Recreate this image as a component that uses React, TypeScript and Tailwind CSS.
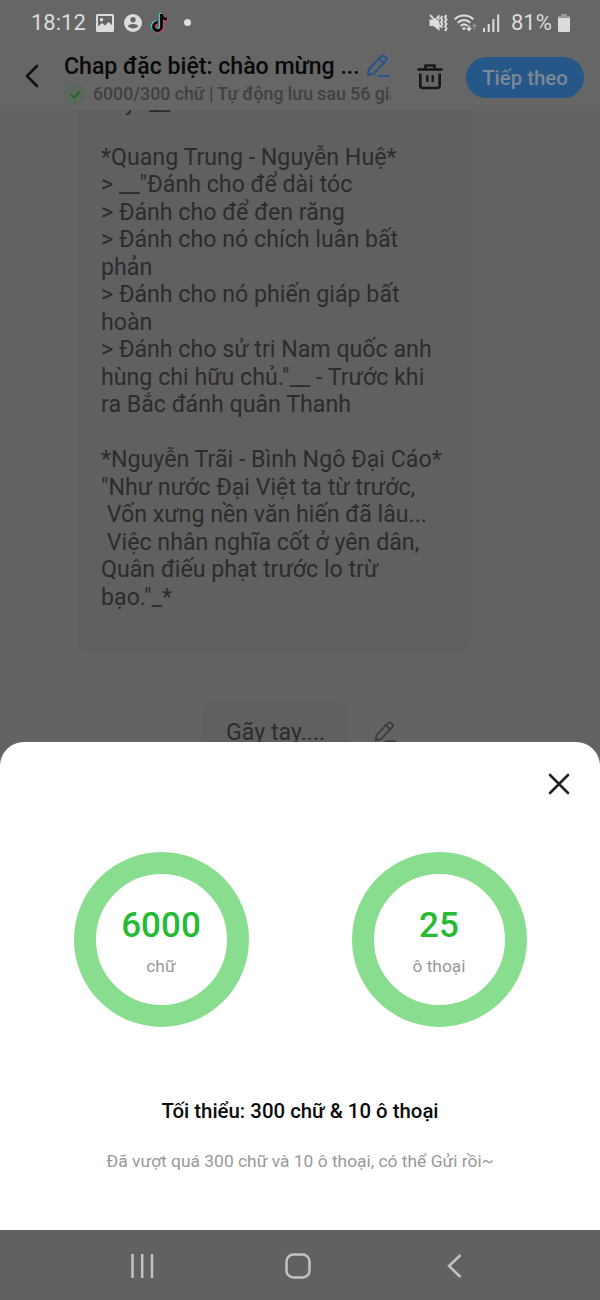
import React from 'react';

const storyLines = [
  'xây" __',
  '',
  '*Quang Trung - Nguyễn Huệ*',
  '> __"Đánh cho để dài tóc',
  '> Đánh cho để đen răng',
  '> Đánh cho nó chích luân bất',
  'phản',
  '> Đánh cho nó phiến giáp bất',
  'hoàn',
  '> Đánh cho sử tri Nam quốc anh',
  'hùng chi hữu chủ."__ - Trước khi',
  'ra Bắc đánh quân Thanh',
  '',
  '*Nguyễn Trãi - Bình Ngô Đại Cáo*',
  '"Như nước Đại Việt ta từ trước,',
  ' Vốn xưng nền văn hiến đã lâu...',
  ' Việc nhân nghĩa cốt ở yên dân,',
  'Quân điếu phạt trước lo trừ',
  'bạo."_*',
];

const PencilIcon: React.FC<{ className?: string }> = ({ className }) => (
  <svg viewBox="0 0 24 24" fill="none" stroke="currentColor" strokeWidth="2" strokeLinecap="round" strokeLinejoin="round" className={className}>
    <path d="M2 21l.8-5.500L15 2.300a2.600 2.600 0 0 1 3.700-.100l1 1a2.600 2.600 0 0 1 .1 3.600L8 19.500z" />
    <path d="M13.500 5l4.200 4" />
    <path d="M12.500 22h10.500" />
  </svg>
);

const StatusBar: React.FC = () => (
  <div className="flex h-[45px] items-center pl-[31px] pr-[30px] text-[22px] text-[#dcdcdc]">
    <span className="w-[55px] whitespace-nowrap">18:12</span>
    <svg viewBox="0 0 18 18" className="ml-[10px] h-[18px] w-[18px]">
      <path fill="currentColor" fillRule="evenodd" d="M1.500 0h15A1.500 1.500 0 0 1 18 1.500v15a1.500 1.500 0 0 1-1.500 1.500h-15A1.500 1.500 0 0 1 0 16.500v-15A1.500 1.500 0 0 1 1.500 0zM2 2v10.500l4-3.500 3 2.500 3.500-3.500 3.500 3V2zM5.500 4a1.700 1.700 0 1 1 0 3.400A1.700 1.700 0 0 1 5.500 4z" />
    </svg>
    <svg viewBox="0 0 18 18" className="ml-[10px] h-[18px] w-[18px]">
      <circle cx="9" cy="9" r="9" fill="currentColor" />
      <circle cx="9" cy="5.800" r="2.700" fill="#666" />
      <path d="M3.700 12C5 9.200 13 9.200 14.300 12 12.500 15.200 5.500 15.200 3.700 12z" fill="#666" />
    </svg>
    <svg viewBox="0 0 18 20" fill="none" strokeWidth="2.800" className="ml-[9px] h-5 w-[18px]">
      <g stroke="#42cdc8" transform="translate(-1.200 -.8)">
        <path d="M10.500 1v12.500a4 4 0 1 1-4-4" />
        <path d="M10.500 1.500c.5 3 2.500 4.500 5.500 4.700" />
      </g>
      <g stroke="#e0415f" transform="translate(1.200 .8)">
        <path d="M10.500 1v12.500a4 4 0 1 1-4-4" />
        <path d="M10.500 1.500c.5 3 2.500 4.500 5.500 4.700" />
      </g>
      <g stroke="#050505">
        <path d="M10.500 1v12.500a4 4 0 1 1-4-4" />
        <path d="M10.500 1.500c.5 3 2.500 4.500 5.500 4.700" />
      </g>
    </svg>
    <span className="ml-[15px] h-[7px] w-[7px] rounded-full bg-[#dcdcdc]" />

    <svg viewBox="0 0 19 18" className="ml-auto h-[18px] w-[19px]" fill="none" stroke="currentColor">
      <path d="M.5 5.500h4l6-5V17l-6-5h-4z" fill="currentColor" stroke="none" />
      <path d="M4 .5l8 8.500" stroke="#666" />
      <path d="M1 .8l10.500 12" strokeWidth="1.800" />
      <path d="M13.300 2l-1.300 2 1.300 2-1.300 2 1.300 2-1.300 2 1.300 2M17.300 1L16 3.300l1.500 2.200L16 7.800l1.500 2.200-1.500 2.300 1.500 2.200L16 17" strokeWidth="2" />
    </svg>
    <svg viewBox="0 0 24 18" className="ml-[6px] h-[18px] w-6" fill="none" stroke="currentColor" strokeWidth="2.100">
      <path d="M.7 5.200a13.500 13.500 0 0 1 18.600 0M3.700 8.700a9 9 0 0 1 12.600 0M6.700 11.900a5 5 0 0 1 6.600 0" />
      <circle cx="10" cy="14.500" r="1.600" fill="currentColor" stroke="none" />
      <path d="M15 11.500v5M12.900 14l2.100 2.300 2.100-2.300" strokeWidth="1.600" />
      <path d="M20.500 15.500v-5M18.600 12.500l1.900-2 1.900 2" stroke="#929292" strokeWidth="1.300" />
    </svg>
    <svg viewBox="0 0 17 18" className="ml-[5px] h-[18px] w-[17px]" fill="currentColor">
      <path d="M0 14h2v4H0zM4.700 10h2v8h-2zM9.400 5h2v13h-2zM14.200.500h2V18h-2z" />
    </svg>
    <span className="ml-[11px] w-[41px] whitespace-nowrap">81%</span>
    <svg viewBox="0 0 12 18" className="ml-[6px] h-[18px] w-3">
      <path d="M3 0h6v2h3v3H0V2h3z" fill="#999" />
      <path d="M0 4h12v13a1 1 0 0 1-1 1H1a1 1 0 0 1-1-1z" fill="currentColor" />
    </svg>
  </div>
);

const Header: React.FC = () => (
  <header className="flex h-[65px] bg-[#666]">
    <svg viewBox="0 0 14 24" className="ml-[25px] mt-[19px] h-6 w-[14px]" fill="none" stroke="#121212" strokeWidth="2.600" strokeLinecap="round" strokeLinejoin="round">
      <path d="M12 2L2 12l10 10" />
    </svg>
    <div className="ml-[25px] w-[327px]">
      <div className="mt-[8px] flex h-7">
        <h1 className="w-[302px] whitespace-nowrap text-[23.100px] font-medium leading-7 text-[#090909]">Chap đặc biệt: chào mừng ...</h1>
        <PencilIcon className="mt-px h-6 w-6 text-[#25568b]" />
      </div>
      <div className="mt-[2px] flex h-[22px] items-center overflow-hidden">
        <span className="flex h-[22px] w-[22px] shrink-0 items-center justify-center rounded-full bg-[#5c685d]">
          <svg viewBox="0 0 12 10" className="h-[9px] w-[11px]" fill="none" stroke="#156c1c" strokeWidth="1.800">
            <path d="M1 5l3.500 3.500L11 1.500" />
          </svg>
        </span>
        <span className="ml-[7px] whitespace-nowrap text-[17.700px] font-medium text-[#414141]">6000/300 chữ | Tự động lưu sau 56 giây</span>
      </div>
    </div>
    <svg viewBox="0 0 26 27" className="ml-[26px] mt-[18px] h-[27px] w-[26px]" fill="none" stroke="#171717" strokeWidth="2.600" strokeLinejoin="round">
      <path d="M.5 6.500h25M8.500 6.500v-4h9v4M3.300 10.500V22.500a2.500 2.500 0 0 0 2.500 2.500h14.400a2.500 2.500 0 0 0 2.500-2.500V10.500" />
      <path d="M10.300 12v7M15.700 12v7" strokeWidth="2.300" />
    </svg>
    <button className="ml-[23px] mt-3 h-[41px] w-[118px] rounded-full bg-[#265789] pt-px text-[20.400px] font-medium text-[#7b8896]">Tiếp theo</button>
  </header>
);

const Ring: React.FC<{ value: string; label: string }> = ({ value, label }) => (
  <div className="flex h-[175px] w-[175px] flex-col items-center rounded-full border-[22px] border-[#88dd8f]">
    <span className="mt-[31px] text-[35px] font-medium leading-[41px] text-[#25bb34]">{value}</span>
    <span className="mt-[10px] whitespace-nowrap text-[17.400px] leading-5 text-[#999]">{label}</span>
  </div>
);

const App: React.FC = () => {
  return (
    <div className="flex h-[1300px] w-[600px] flex-col overflow-hidden bg-[#666] font-['Roboto','Liberation_Sans',sans-serif]">
      <StatusBar />
      <Header />

      <main className="h-[632px] shrink-0 overflow-hidden bg-[#636363] text-[23.200px] leading-[27.500px] text-[#2c2c2c]">
        <div className="-mt-[21.500px] ml-[77px] w-[394px] rounded-xl bg-[#606060] pb-[43px] pl-6">
          {storyLines.map((line, i) => (
            <p key={i} className="h-[27.500px] whitespace-pre">{line}</p>
          ))}
        </div>
        <div className="mt-[47px] flex pl-[202px]">
          <div className="h-[62px] w-[147px] rounded-xl bg-[#606060] pl-6 pt-[18px]">Gãy tay....</div>
          <PencilIcon className="ml-[25px] mt-5 h-[22px] w-[22px] text-[#3d3d3d]" />
        </div>
      </main>

      <div className="h-[488px] shrink-0 bg-[#636363]">
        <section className="flex h-full flex-col items-center rounded-t-[24px] bg-white">
          <button className="mr-[30px] mt-[31px] self-end">
            <svg viewBox="0 0 22 22" className="h-[22px] w-[22px]" fill="none" stroke="#222" strokeWidth="2.600" strokeLinecap="round">
              <path d="M2 2l18 18M20 2L2 20" />
            </svg>
          </button>
          <div className="mt-[57px] flex gap-[103px]">
            <Ring value="6000" label="chữ" />
            <Ring value="25" label="ô thoại" />
          </div>
          <p className="mt-[72px] whitespace-nowrap text-[20.400px] font-medium leading-6 text-[#0c0c0c]">Tối thiểu: 300 chữ &amp; 10 ô thoại</p>
          <p className="mt-[28px] whitespace-nowrap text-[17.400px] leading-5 text-[#999]">Đã vượt quá 300 chữ và 10 ô thoại, có thể Gửi rồi~</p>
        </section>
      </div>

      <nav className="flex h-[70px] items-center bg-[#616161] pt-[2px] text-[#c2c2c2]">
        <svg viewBox="0 0 24 26" className="ml-[130px] h-[26px] w-6" stroke="currentColor" strokeWidth="2.500">
          <path d="M2.500 1v24M12.200 1v24M22 1v24" />
        </svg>
        <svg viewBox="0 0 26 26" className="ml-[131px] h-[26px] w-[26px]" fill="none" stroke="currentColor" strokeWidth="2.500">
          <rect x="1.500" y="1.500" width="23" height="23" rx="7" />
        </svg>
        <svg viewBox="0 0 15 26" className="ml-[136px] h-[26px] w-[15px]" fill="none" stroke="currentColor" strokeWidth="2.500">
          <path d="M13.500 2L2 13l11.500 11" />
        </svg>
      </nav>
    </div>
  );
};

export default App;
